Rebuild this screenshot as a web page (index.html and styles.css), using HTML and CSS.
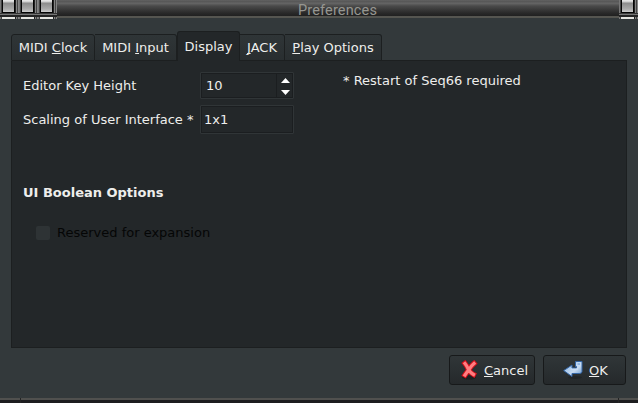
FILE: index.html
```html
<!DOCTYPE html>
<html lang="en">
<head>
<meta charset="utf-8">
<title>Preferences</title>
<link rel="stylesheet" href="styles.css">
</head>
<body>
<div class="window">
  <header class="titlebar">
    <div class="controls"><i class="control"></i><i class="control"></i><i class="control"></i></div>
    <span class="title">Preferences</span>
    <div class="controls right"><i class="control"></i></div>
  </header>
  <main class="body">
    <nav class="tabs">
      <div class="tab clock"><span>MIDI <u>C</u>lock</span></div>
      <div class="tab input"><span>MIDI <u>I</u>nput</span></div>
      <div class="tab display"><span>Display</span></div>
      <div class="tab jack"><span><u>J</u>ACK</span></div>
      <div class="tab play"><span><u>P</u>lay Options</span></div>
      <div class="edge"></div>
    </nav>
    <section class="panel">
      <div class="options">
        <label>Editor Key Height</label>
        <div class="field spin">
          <span class="value">10</span>
          <span class="arrows">
            <svg width="9" height="5" viewBox="0 0 9 5"><path d="M0 5 4.5 0 9 5z"/></svg>
            <svg width="9" height="5" viewBox="0 0 9 5"><path d="M0 0h9L4.500 5z"/></svg>
          </span>
        </div>
        <div class="note">* Restart of Seq66 required</div>
        <label class="second">Scaling of User Interface *</label>
        <div class="field scale"><span class="value">1x1</span></div>
      </div>
      <h2>UI Boolean Options</h2>
      <div class="check"><i class="box"></i><span>Reserved for expansion</span></div>
    </section>
    <div class="buttons">
      <div class="button cancel">
        <svg width="18" height="20" viewBox="0 0 18 20">
          <ellipse cx="9" cy="17.500" rx="7" ry="2" fill="#1d2022"/>
          <path d="M5 3.500Q7 6 8.500 9.500Q10.500 13 13.500 14.500M14 3.500Q11 6 9 9.500Q7 12 5 15" fill="none" stroke="#d80d18" stroke-width="5.200" stroke-linecap="square"/>
          <path d="M5 3.500Q7 6 8.500 9.500Q10.500 13 13.500 14.500M14 3.500Q11 6 9 9.500Q7 12 5 15" fill="none" stroke="#ff7d80" stroke-width="3.200" stroke-linecap="square"/>
        </svg>
        <span><u>C</u>ancel</span>
      </div>
      <div class="button ok">
        <svg width="20" height="20" viewBox="0 0 20 20">
          <defs><linearGradient id="arrow" x2="1" y2="1"><stop stop-color="#83b2e5"/><stop offset=".6" stop-color="#c6daf0"/><stop offset="1" stop-color="#5e92cc"/></linearGradient></defs>
          <ellipse cx="12" cy="17.500" rx="7" ry="1.500" fill="#202427"/>
          <path d="M12.500 1.500h6.500v10q0 2-2.500 2H9v3L.7 10.600 9 5v3h4.500V6.500h-1z" fill="url(#arrow)" stroke="#3465a4"/>
          <path d="M14 2.800h3.500v2.500H14zM7.500 9.200H15" fill="#83aee0" stroke="#cfe2f8" stroke-width=".8"/>
        </svg>
        <span><u>O</u>K</span>
      </div>
    </div>
  </main>
  <footer class="frame"><i></i><i></i><i></i></footer>
</div>
</body>
</html>
```
FILE: styles.css
```css
* { box-sizing: border-box; }
body { margin: 0; }
.window {
  width: 638px;
  height: 403px;
  display: flex;
  flex-direction: column;
  overflow: hidden;
  background: #33393b;
  color: #eeeeec;
  font: 13px/16px "DejaVu Sans", sans-serif;
}
u { text-decoration: underline; text-decoration-thickness: 1px; text-underline-offset: 1px; text-decoration-skip-ink: none; }
svg { display: block; flex: none; }
.titlebar {
  height: 19px;
  flex: none;
  display: grid;
  grid-template-columns: 57px 1fr 19px;
  background: linear-gradient(#626262 0, #555 2px, #686868 3px, #4a4a4a 6px, #292929 13px, #202020 16px, #555550 16px, #555550 18px, #33393b 18px);
}
.title {
  color: #969691;
  font: 14.500px/22px Roboto, sans-serif;
  height: 19px;
  letter-spacing: .15px;
  text-align: center;
  padding-right: 1px;
}
.controls {
  display: flex;
  gap: 5px;
  padding-left: 2px;
  background:
    linear-gradient(#4440, #4440 13px, #333 13px, #333 14px, #777 14px, #777 15px, #242424 15px, #242424 17px, #4440 17px),
    repeating-linear-gradient(90deg, #777 0, #777 1px, #444 1px, #444 2px, #222 2px, #222 16px, #858585 16px, #858585 17px, #444 17px, #444 18px, #858585 18px, #858585 19px);
}
.control {
  width: 13px;
  margin-right: 1px;
  height: 19px;
  flex: none;
  background:
    linear-gradient(90deg, #050505 1px, #0000 1px, #0000 12px, #050505 12px) 0 0 / 100% 13px no-repeat,
    linear-gradient(#eee 0, #ccc 2px, #8c8c8c 3px, #aaa 9px, #ccc 12px, #050505 12px, #050505 13px, #444 13px, #333 14px, #777 14px, #777 15px, #242424 15px, #242424 17px, #e6e6e2 17px);
}
.body { height: 379px; flex: none; padding: 12px 11px 0; }
.tabs { display: flex; align-items: flex-end; height: 30px; }
.tab {
  height: 27px;
  flex: none;
  border: 1px solid #1c1f20;
  border-left-width: 0;
  border-radius: 0 3px 0 0;
  background: linear-gradient(#2f3537, #292e30);
  text-align: center;
  padding-top: 5px;
}
.clock { width: 84px; border-left-width: 1px; border-radius: 3px 3px 0 0; }
.input { width: 82px; }
.display { width: 63px; height: 30px; border-left-width: 1px; border-bottom: 0; border-radius: 3px 3px 0 0; background: #232729; padding-top: 7px; }
.jack { width: 45px; }
.play { width: 97px; }
.edge { flex: 1; border-bottom: 1px solid #1c1f20; }
.panel {
  height: 287px;
  border: 1px solid #1c1f20;
  border-top: 0;
  background: #232729;
  padding: 11px 11px 0;
}
.options { display: grid; grid-template-columns: 177px 95px 1fr; grid-template-rows: 27px 30px; row-gap: 5px; }
.options label { padding-top: 6px; white-space: nowrap; }
.options .second { padding-top: 8px; }
.note { padding: 1px 0 0 48px; }
.field { display: flex; border: 1px solid #303537; border-radius: 1px; box-shadow: inset 0 0 0 1px #1b1e20; background: #232729; }
.spin { height: 27px; width: 94px; }
.spin .value { padding: 5px; flex: 1; }
.arrows { width: 17px; display: flex; flex-direction: column; align-items: center; gap: 7px; padding-top: 5px; border-left: 1px solid #1b1e20; fill: #fff; }
.scale { width: 94px; height: 29px; margin-top: 1px; }
.scale .value { padding: 6px 3px; }
h2 { font-size: 13px; line-height: 16px; margin: 51px 0 0; }
.check { display: flex; align-items: center; color: #050606; padding-left: 13px; margin-top: 24px; gap: 7px; }
.box { width: 14px; height: 14px; border-radius: 2px; background: #2e3335; }
.buttons { display: flex; justify-content: flex-end; gap: 8px; padding: 7px 1px 0 0; }
.button {
  height: 30px;
  display: flex;
  border: 1px solid #17191a;
  border-radius: 3px;
  background: linear-gradient(#303638, #25292b);
}
.button span { padding-top: 7px; }
.cancel { width: 86px; padding: 0 0 0 10px; gap: 6px; }
.cancel svg { margin-top: 4px; }
.ok { width: 83px; padding-left: 19px; gap: 6px; }
.ok svg { margin-top: 4px; }
.frame { height: 5px; flex: none; display: grid; grid-template-columns: 20px 1fr 20px; background: linear-gradient(#50504e 2px, #1d1d1f 2px); }
.frame i + i { border-left: 1px solid #242424; }
```
